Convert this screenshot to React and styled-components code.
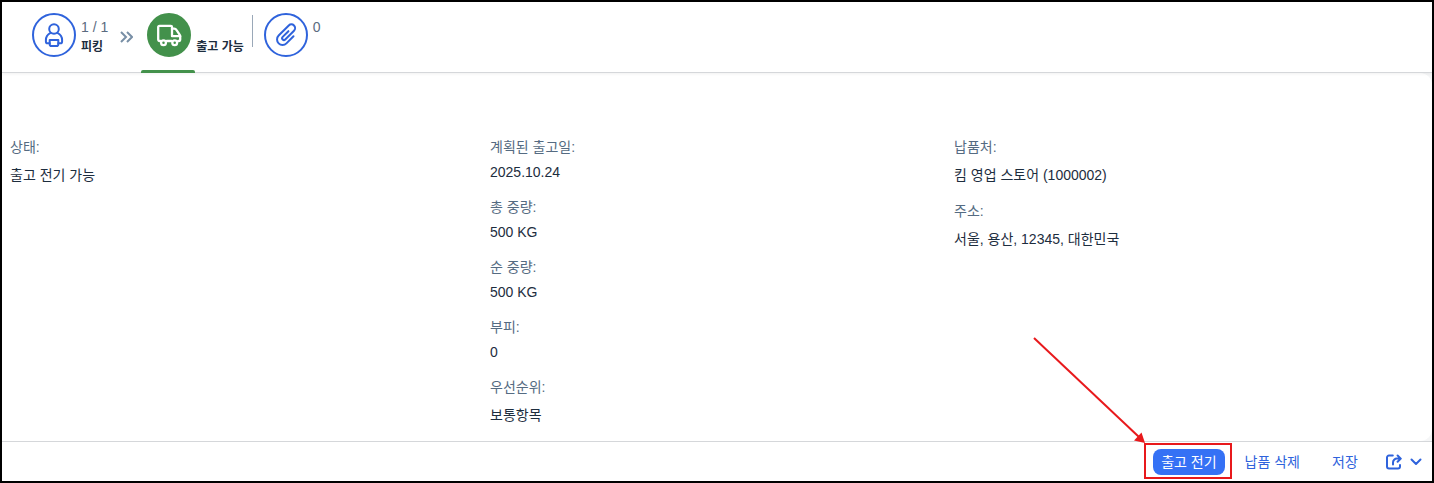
import React from 'react';
import styled, { createGlobalStyle, css } from 'styled-components';

const GlobalStyle = createGlobalStyle`
  * {
    box-sizing: border-box;
  }
  body {
    margin: 0;
    font-family: "Liberation Sans", "Noto Sans CJK KR", sans-serif;
    font-size: 14px;
    color: #1d2d3e;
    background: #ffffff;
  }
  button {
    font-family: inherit;
    cursor: pointer;
  }
`;

const Page = styled.div`
  display: flex;
  flex-direction: column;
  min-height: 100vh;
  border: 2px solid #000000;
`;

const TabBar = styled.nav`
  position: relative;
  display: flex;
  align-items: flex-start;
  padding-left: 24px;
  border-bottom: 1px solid #d5d7da;
  box-shadow: 0 1px 3px rgba(0, 0, 0, 0.06);
`;

const Tab = styled.button`
  display: flex;
  align-items: flex-start;
  padding: 0;
  border: 0;
  background: transparent;
  text-align: left;
  color: #1d2d3e;
`;

const IconSlot = styled.span`
  position: relative;
  padding: 11px 5px 15px 6px;
  ${({ $selected }) => $selected && css`
    &::after {
      content: '';
      position: absolute;
      left: 0;
      right: 1px;
      bottom: -1px;
      height: 3px;
      border-radius: 2px 2px 0 0;
      background: #43914b;
    }
  `}
`;

const Circle = styled.span`
  display: flex;
  align-items: center;
  justify-content: center;
  width: 44px;
  height: 44px;
  border: 2px solid ${({ $selected }) => ($selected ? '#43914b' : '#2f63dc')};
  border-radius: 50%;
  color: ${({ $selected }) => ($selected ? '#ffffff' : '#2f63dc')};
  background: ${({ $selected }) => ($selected ? '#43914b' : '#ffffff')};
`;

const TabText = styled.span`
  display: flex;
  flex-direction: column;
  gap: 3px;
  padding-top: 17px;
`;

const Count = styled.span`
  min-height: 16px;
  font-size: 14px;
  line-height: 16px;
  color: #5b6b80;
`;

const TabName = styled.span`
  font-size: 12px;
  line-height: 18px;
  font-weight: 700;
`;

const Arrows = styled.svg`
  flex: none;
  margin: 29px 8px 0 12px;
  color: #788fa6;
`;

const Separator = styled.span`
  width: 1px;
  height: 32px;
  margin: 13px 5px 0 8px;
  background: #9aa8b8;
`;

const Main = styled.main`
  flex: 1;
  display: flex;
  background: #f5f6f7;
`;

const Panel = styled.section`
  flex: 1;
  display: grid;
  grid-template-columns: 240fr 232fr 239fr;
  align-items: start;
  padding: 63px 0 16px 8px;
  border-radius: 0 12px 12px 0;
  background: #ffffff;
`;

const Fields = styled.dl`
  display: flex;
  flex-direction: column;
  gap: 16px;
  margin: 0;
`;

const Field = styled.div`
  display: flex;
  flex-direction: column;
  gap: 8px;
`;

const Label = styled.dt`
  color: #556b82;
`;

const Value = styled.dd`
  margin: 0;
`;

const Footer = styled.footer`
  display: flex;
  align-items: center;
  justify-content: flex-end;
  gap: 12px;
  padding: 7px 10px 6px;
  border-top: 1px solid #d5d7da;
`;

const Button = styled.button`
  height: 26px;
  min-width: 50px;
  padding: 0 8px;
  border: 0;
  border-radius: 8px;
  font-size: 14px;
  line-height: 20px;
  color: ${({ $primary }) => ($primary ? '#ffffff' : '#2f63dc')};
  background: ${({ $primary }) => ($primary ? '#3571f5' : 'transparent')};
`;

const ShareButton = styled.button`
  display: flex;
  align-items: center;
  gap: 8px;
  height: 26px;
  padding: 0 0 0 4px;
  border: 0;
  background: transparent;
  color: #2f63dc;
`;

const Highlight = styled.div`
  position: relative;
  display: flex;
  &::after {
    content: '';
    position: absolute;
    inset: -6px -7px -4px -9px;
    border: 2px solid #e8191c;
    pointer-events: none;
  }
`;

const Pointer = styled.svg`
  position: absolute;
  right: 100%;
  bottom: 100%;
  margin: 0 8px 6px 0;
  color: #e8191c;
  pointer-events: none;
`;

const PersonIcon = () => (
  <svg width="24" height="24" viewBox="0 0 24 24" fill="none" stroke="currentColor" strokeWidth="2" strokeLinejoin="round" strokeLinecap="round">
    <circle cx="12" cy="6" r="4.8" />
    <path d="M8.2 10.2C5.4 11.6 3.9 14.2 3.9 17.2v1.2c0 1.2.7 1.9 1.8 1.9h2M15.8 10.2c2.8 1.4 4.3 4 4.3 7v1.2c0 1.2-.7 1.9-1.8 1.9h-2" />
    <path d="M7.7 17h8.6v4.2a1.8 1.8 0 0 1-1.8 1.8h-5a1.8 1.8 0 0 1-1.8-1.8z" />
  </svg>
);

const TruckIcon = () => (
  <svg width="26" height="26" viewBox="0 0 26 26" fill="none" stroke="currentColor" strokeWidth="2.3" strokeLinejoin="round" strokeLinecap="round">
    <path d="M4.4 19H3.6A1.4 1.4 0 0 1 2.2 17.6V5.2A1.4 1.4 0 0 1 3.6 3.8H14.8A1.2 1.2 0 0 1 16 5V14.2H24.2M10.8 19h4.6" />
    <path d="M16 6.6h2.2c1 0 1.7.4 2.2 1.2l3.2 4.8c.4.6.6 1.1.6 1.8v3.2c0 .9-.5 1.4-1.4 1.4h-.6" />
    <circle cx="7.5" cy="20.8" r="2.4" />
    <circle cx="18.7" cy="20.8" r="2.4" />
  </svg>
);

const ClipIcon = () => (
  <svg width="28" height="28" viewBox="0 0 28 28" fill="none" stroke="currentColor" strokeWidth="2" strokeLinecap="round">
    <g transform="translate(1 0) rotate(45 14 14) translate(8.5 1.8)">
      <path d="M11 8.5V18.5a5.5 5.5 0 0 1-11 0V4.2a3.7 3.7 0 0 1 7.4 0V16.6a1.8 1.8 0 0 1-3.6 0V8.5" />
    </g>
  </svg>
);

const ShareIcon = () => (
  <svg width="16" height="16" viewBox="0 0 16 16" fill="none" stroke="currentColor" strokeWidth="2" strokeLinecap="round" strokeLinejoin="round">
    <path d="M6.8 1.5H3A2 2 0 0 0 1 3.5v9a2 2 0 0 0 2 2h9a2 2 0 0 0 2-2V11" />
    <path d="M7 10.5V8.6a4 4 0 0 1 4-4h3.4M11.6 1.5L14.8 4.6 11.6 7.8" />
  </svg>
);

const ChevronIcon = () => (
  <svg width="12" height="8" viewBox="0 0 12 8" fill="none" stroke="currentColor" strokeWidth="2" strokeLinecap="round" strokeLinejoin="round">
    <path d="M1.5 1.5L6 6l4.5-4.5" />
  </svg>
);

const columns = [
  [{ label: '상태', value: '출고 전기 가능' }],
  [
    { label: '계획된 출고일', value: '2025.10.24' },
    { label: '총 중량', value: '500 KG' },
    { label: '순 중량', value: '500 KG' },
    { label: '부피', value: '0' },
    { label: '우선순위', value: '보통항목' },
  ],
  [
    { label: '납품처', value: '킴 영업 스토어 (1000002)' },
    { label: '주소', value: '서울, 용산, 12345, 대한민국' },
  ],
];

const Header = () => (
  <TabBar>
    <Tab type="button">
      <IconSlot>
        <Circle><PersonIcon /></Circle>
      </IconSlot>
      <TabText>
        <Count>1 / 1</Count>
        <TabName>피킹</TabName>
      </TabText>
    </Tab>
    <Arrows width="13" height="12" viewBox="0 0 13 12" fill="none" stroke="currentColor" strokeWidth="2">
      <path d="M1 1l5 5-5 5M7 1l5 5-5 5" />
    </Arrows>
    <Tab type="button" aria-current="page">
      <IconSlot $selected>
        <Circle $selected><TruckIcon /></Circle>
      </IconSlot>
      <TabText>
        <Count />
        <TabName>출고 가능</TabName>
      </TabText>
    </Tab>
    <Separator />
    <Tab type="button" aria-label="첨부파일">
      <IconSlot>
        <Circle><ClipIcon /></Circle>
      </IconSlot>
      <TabText>
        <Count>0</Count>
      </TabText>
    </Tab>
  </TabBar>
);

const App = () => (
  <>
    <GlobalStyle />
    <Page>
      <Header />
      <Main>
        <Panel>
          {columns.map((fields) => (
            <Fields key={fields[0].label}>
              {fields.map(({ label, value }) => (
                <Field key={label}>
                  <Label>{label}:</Label>
                  <Value>{value}</Value>
                </Field>
              ))}
            </Fields>
          ))}
        </Panel>
      </Main>
      <Footer>
        <Highlight>
          <Button type="button" $primary>출고 전기</Button>
          <Pointer width="112" height="106" viewBox="0 0 112 106">
            <path d="M1 1L106 100" stroke="currentColor" strokeWidth="2" />
            <path d="M112 106L101 103.5 108.5 95.5z" fill="currentColor" />
          </Pointer>
        </Highlight>
        <Button type="button">납품 삭제</Button>
        <Button type="button">저장</Button>
        <ShareButton type="button" aria-label="공유">
          <ShareIcon />
          <ChevronIcon />
        </ShareButton>
      </Footer>
    </Page>
  </>
);

export default App;
